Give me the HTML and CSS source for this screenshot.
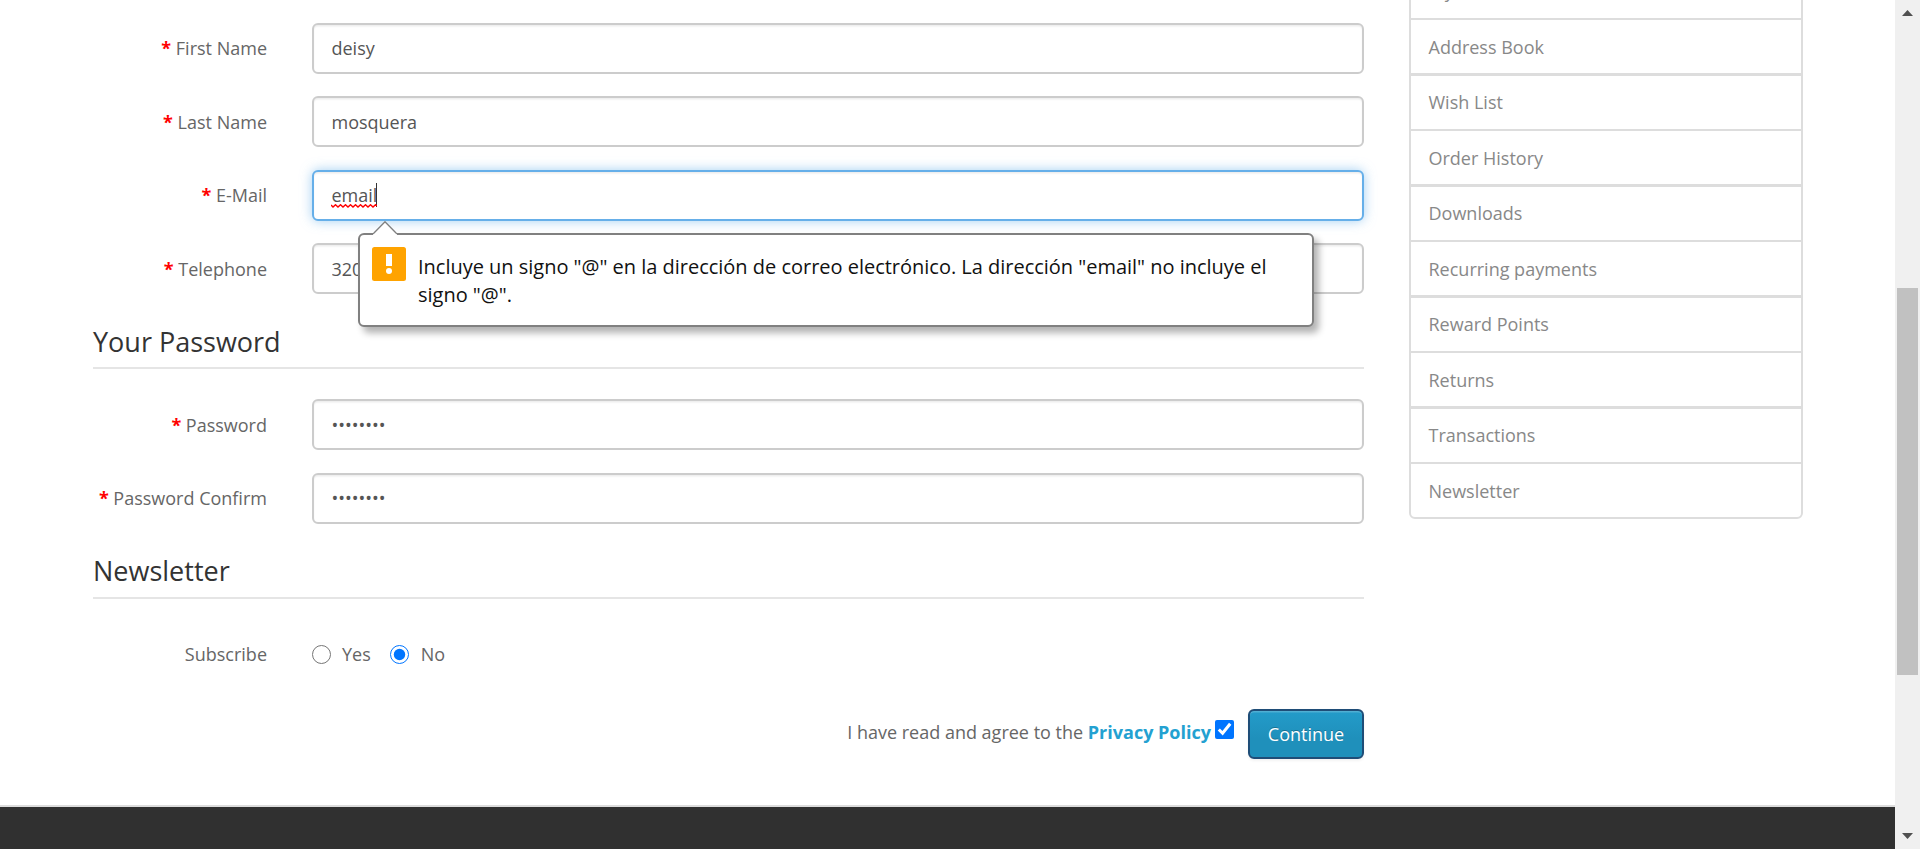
FILE: index.html
```html
<!DOCTYPE html>
<html lang="en">
<head>
<meta charset="utf-8">
<title>Register Account</title>
<link rel="stylesheet" href="styles.css">
</head>
<body>
<div class="viewport">
  <div class="page">
    <div class="container">
      <form class="content">
        <div class="row"><label class="label required">First Name</label><input class="control" type="text" value="deisy" spellcheck="false"></div>
        <div class="row"><label class="label required">Last Name</label><input class="control" type="text" value="mosquera" spellcheck="false"></div>
        <div class="row email-row"><label class="label required">E-Mail</label>
          <div class="control focused"><span class="misspelled">email<svg class="squiggle" width="46" height="4" viewBox="0 0 46 4"><path d="M0 1 L2 3 L4.5 .8 L7 3 L9.5 .8 L12 3 L14.5 .8 L17 3 L19.5 .8 L22 3 L24.5 .8 L27 3 L29.5 .8 L32 3 L34.5 .8 L37 3 L39.5 .8 L42 3 L44.5 .8 L46 2"/></svg></span><i class="caret"></i></div>
          <div class="bubble">
            <svg class="bubble-arrow" width="26" height="15" viewBox="0 0 26 15"><path class="arrow-fill" d="M1 13 L13 1 L25 13 V15 H1 Z"/><path class="arrow-line" d="M.5 13 L2 12 L13 .8 L24 12 L25.5 13"/></svg>
            <svg class="bubble-icon" width="34" height="34" viewBox="0 0 34 34"><rect class="icon-bg" width="34" height="34" rx="2.5"/><path class="icon-mark" d="M14 7h6v12h-6z"/><circle class="icon-mark" cx="17" cy="24" r="3"/></svg>
            <p class="bubble-text">Incluye un signo "@" en la dirección de correo electrónico. La dirección "email" no incluye el<br>signo "@".</p>
          </div>
        </div>
        <div class="row"><label class="label required">Telephone</label><input class="control" type="text" value="320" spellcheck="false"></div>
        <h2 class="legend">Your Password</h2>
        <div class="row"><label class="label required">Password</label><input class="control" type="password" value="password"></div>
        <div class="row"><label class="label required">Password Confirm</label><input class="control" type="password" value="password"></div>
        <h2 class="legend">Newsletter</h2>
        <div class="row"><span class="label">Subscribe</span>
          <div class="radios"><label class="radio"><input type="radio" name="newsletter">Yes</label><label class="radio"><input type="radio" name="newsletter" checked>No</label></div>
        </div>
        <div class="buttons"><span class="agree">I have read and agree to the <a class="policy">Privacy Policy</a></span><input class="check" type="checkbox" checked><button class="continue" type="button">Continue</button></div>
      </form>
      <nav class="list">
        <a class="item">My Account</a>
        <a class="item">Address Book</a>
        <a class="item">Wish List</a>
        <a class="item">Order History</a>
        <a class="item">Downloads</a>
        <a class="item">Recurring payments</a>
        <a class="item">Reward Points</a>
        <a class="item">Returns</a>
        <a class="item">Transactions</a>
        <a class="item">Newsletter</a>
      </nav>
    </div>
    <footer class="footer"></footer>
  </div>
  <div class="scrollbar">
    <svg class="arrow" width="11" height="6" viewBox="0 0 11 6"><path d="M5.5 0 L11 6 H0 Z"/></svg>
    <div class="thumb"></div>
    <svg class="arrow arrow-down" width="11" height="6" viewBox="0 0 11 6"><path d="M0 0 H11 L5.5 6 Z"/></svg>
  </div>
</div>
</body>
</html>
```

FILE: styles.css
```css
* { box-sizing: border-box; }
html { height: 849px; overflow: hidden; }
body {
  margin: 0;
  height: 849px;
  overflow: hidden;
  background: #fff;
  color: #666;
  font: 18px/30px "Open Sans", "Noto Sans", sans-serif;
}
.viewport { display: flex; height: 849px; overflow: hidden; }
.page { flex: 1; display: flex; flex-direction: column; min-width: 0; }
.container { display: flex; gap: 45px; height: 805px; padding: 0 92px 0 93px; }
.content { width: 1271px; padding-top: 22.75px; }

.row { display: flex; gap: 45px; height: 51px; margin-bottom: 22.5px; position: relative; }
.label { width: 174px; padding-top: 10.5px; text-align: right; white-space: nowrap; }
.required::before { content: "* "; color: #f00; font-weight: bold; }
.control {
  flex: 1;
  min-width: 0;
  height: 51px;
  padding: 0 17.5px;
  border: 2px solid #ccc;
  border-radius: 6px;
  outline: none;
  background: #fff;
  box-shadow: inset 0 1.5px 1.5px rgba(0, 0, 0, .075);
  color: #555;
  font: inherit;
}
.email-row { z-index: 2; }
.focused {
  display: flex;
  align-items: center;
  border-color: #66afe9;
  box-shadow: inset 0 1.5px 1.5px rgba(0, 0, 0, .075), 0 0 12px rgba(102, 175, 233, .6);
}
.misspelled { position: relative; }
.squiggle { position: absolute; left: -1px; top: 24px; fill: none; stroke: #f00; stroke-width: 1.5; }
.caret { width: 1px; height: 24px; margin-left: -1px; background: #333; }

.bubble {
  position: absolute;
  left: 265px;
  top: 63px;
  display: flex;
  gap: 12px;
  width: 956px;
  height: 94px;
  padding: 12px;
  border: 2px solid #808080;
  border-radius: 6px;
  background: #fff;
  box-shadow: 5px 6px 7px rgba(0, 0, 0, .3);
}
.bubble-arrow { position: absolute; left: 12px; top: -14px; }
.arrow-fill { fill: #fff; }
.arrow-line { fill: none; stroke: #808080; stroke-width: 1.4; }
.bubble-icon { flex: none; }
.icon-bg { fill: #ffa300; }
.icon-mark { fill: #fff; }
.bubble-text { margin: 6px 0 0; color: #111; font-size: 20px; line-height: 28px; letter-spacing: -.015px; white-space: nowrap; }

.legend {
  height: 52.25px;
  margin: 0 0 30.25px;
  padding-top: 6px;
  border-bottom: 2px solid #e5e5e5;
  color: #333;
  font-size: 27px;
  font-weight: 400;
  line-height: 38px;
}

.radios { display: flex; gap: 19px; padding-top: 10.5px; }
.radio { display: flex; }
.radio input { width: 19px; height: 19px; margin: 6px 11px 0 0; }
.radio + .radio input { margin-right: 12px; }
.buttons { display: flex; justify-content: flex-end; margin-top: 29.5px; height: 50px; }
.agree { padding-top: 8px; }
.policy { color: #23a1d1; font-weight: bold; }
.check { width: 19px; height: 19px; margin: 11px 14px 0 4px; }
.continue {
  width: 116px;
  height: 50px;
  padding: 0;
  border: 2px solid #1f4d77;
  border-radius: 6px;
  background: linear-gradient(to bottom, #239bc9, #1f90bb 60%, #1f90bb);
  box-shadow: inset 0 1.5px 0 rgba(255, 255, 255, .2), 0 1.5px 3px rgba(0, 0, 0, .05);
  color: #fff;
  font: inherit;
  text-shadow: 0 -1px 0 rgba(0, 0, 0, .25);
}

.list { width: 394px; margin-top: -37.5px; }
.item {
  display: block;
  height: 57px;
  margin-bottom: -1.5px;
  padding: 11.5px 17.5px;
  border: 2px solid #ddd;
  color: #888;
}
.item:last-child { border-radius: 0 0 6px 6px; }

.footer { flex: 1; border-top: 2px solid #ddd; background: #303030; }

.scrollbar { display: flex; flex-direction: column; align-items: center; width: 25px; padding: 10px 0; background: #f0f0f0; }
.arrow { flex: none; fill: #505050; }
.arrow-down { margin-top: auto; }
.thumb { width: 21px; height: 387px; margin-top: 272px; background: #c1c1c1; }
```
